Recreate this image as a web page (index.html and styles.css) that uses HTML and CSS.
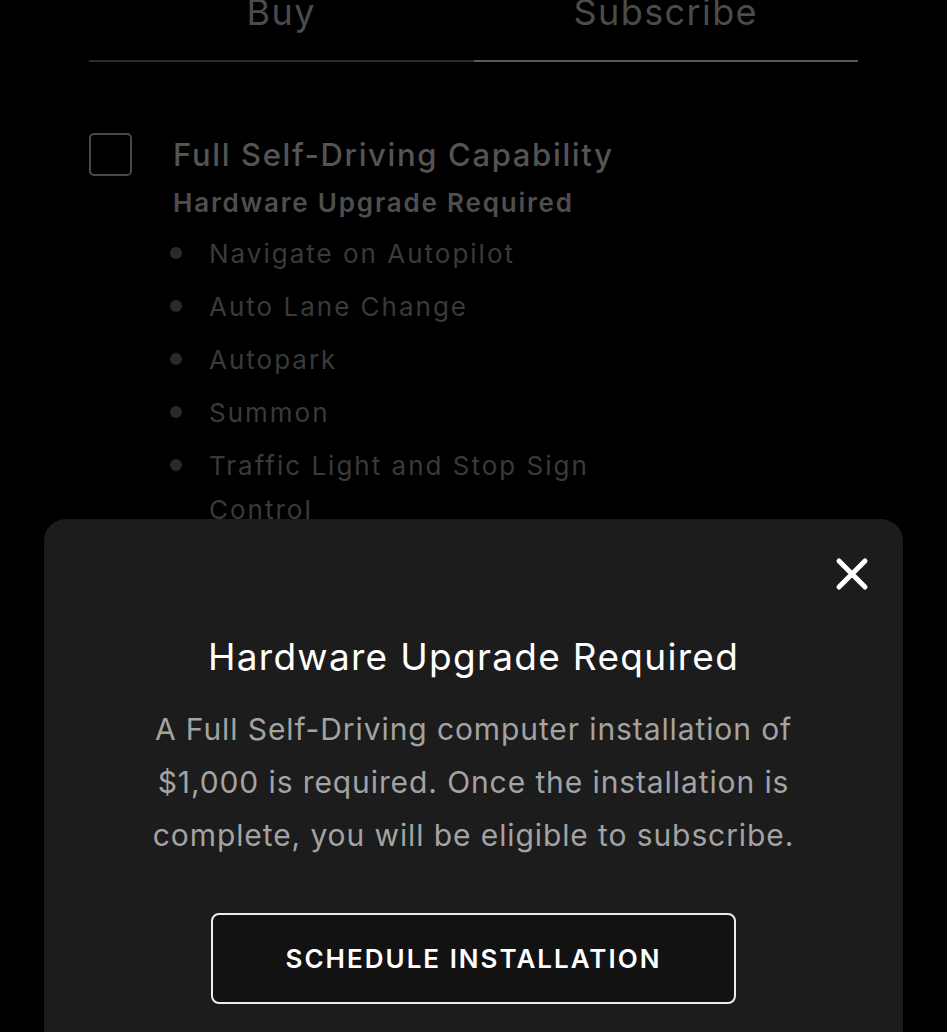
FILE: index.html
```html
<!DOCTYPE html>
<html lang="en">
<head>
  <meta charset="UTF-8">
  <meta name="viewport" content="width=device-width, initial-scale=1.0">
  <title>Full Self-Driving</title>
  <link rel="stylesheet" href="styles.css">
</head>
<body>

  <main class="page">
    <nav class="tabs">
      <span class="tab">Buy</span>
      <span class="tab active">Subscribe</span>
    </nav>

    <section class="feature">
      <span class="checkbox"></span>
      <div class="feature-body">
        <h2>Full Self-Driving Capability</h2>
        <h3>Hardware Upgrade Required</h3>
        <ul>
          <li>Navigate on Autopilot</li>
          <li>Auto Lane Change</li>
          <li>Autopark</li>
          <li>Summon</li>
          <li>Traffic Light and Stop Sign Control</li>
        </ul>
      </div>
    </section>
  </main>

  <aside class="sheet">
    <button class="close" aria-label="Close">
      <svg viewBox="0 0 34 34" width="34" height="34">
        <path d="M4 4 L30 30 M30 4 L4 30" stroke="#fff" stroke-width="5" stroke-linecap="round" fill="none"/>
      </svg>
    </button>
    <h1>Hardware Upgrade Required</h1>
    <p>A Full Self-Driving computer installation of $1,000 is required. Once the installation is complete, you will be eligible to subscribe.</p>
    <button class="schedule">SCHEDULE INSTALLATION</button>
  </aside>

</body>
</html>
```

FILE: styles.css
```css
body {
  font-family: Inter, "Noto Sans", sans-serif;
  margin: 0;
  background-color: #000;
  height: 100vh;
  overflow: hidden;
}
.page {
  padding: 0 89px;
}
.tabs {
  display: flex;
  margin-top: -8px;

  .tab {
    flex: 1;
    text-align: center;
    font-size: 36px;
    line-height: 40px;
    letter-spacing: 1.4px;
    color: #4b4b4b;
    padding-bottom: 28px;
    border-bottom: 2px solid #2c2c2c;
    &.active {
      border-color: #5a5a5a;
    }
  }
}

.feature {
  display: flex;
  gap: 41px;
  margin-top: 71px;

  .checkbox {
    flex: none;
    width: 39px;
    height: 39px;
    border: 2px solid #4a4a4a;
    border-radius: 5px;
  }
  .feature-body {
    padding-top: 4px;
    width: 460px;
  }
  h2 {
    margin: 0;
    font-size: 31px;
    line-height: 36px;
    font-weight: 500;
    color: #545454;
    letter-spacing: 1.65px;
    white-space: nowrap;
  }
  h3 {
    margin: 15px 0 0;
    font-size: 26px;
    line-height: 30px;
    font-weight: 600;
    color: #4e4e4e;
    letter-spacing: 1.8px;
  }
  ul {
    list-style: none;
    margin: 14px 0 0;
    padding: 0;
    display: flex;
    flex-direction: column;
    gap: 9px;
  }
  li {
    position: relative;
    padding-left: 36px;
    font-size: 26px;
    line-height: 44px;
    color: #3a3a3a;
    letter-spacing: 2px;
    &::before {
      content: '';
      position: absolute;
      left: -3px;
      top: 15px;
      width: 12px;
      height: 12px;
      border-radius: 50%;
      background-color: #2a2a2a;
    }
  }
}

.sheet {
  position: absolute;
  top: 519px;
  left: 44px;
  right: 44px;
  height: 600px;
  box-sizing: border-box;
  padding-top: 116px;
  background-color: #1c1c1c;
  border-radius: 22px;
  display: flex;
  flex-direction: column;
  align-items: center;
  text-align: center;

  .close {
    position: absolute;
    top: 38px;
    right: 34px;
    padding: 0;
    border: 0;
    background: none;
    display: flex;
  }
  h1 {
    margin: 0;
    font-size: 37px;
    line-height: 44px;
    font-weight: 400;
    letter-spacing: 1.3px;
    color: #fff;
  }
  p {
    margin: 24px 0 0;
    width: 660px;
    font-size: 30px;
    line-height: 53px;
    letter-spacing: 0.9px;
    color: #a3a3a3;
  }
  .schedule {
    margin-top: 51px;
    width: 525px;
    height: 91px;
    background-color: #121212;
    border: 2px solid #ececec;
    border-radius: 8px;
    color: #fff;
    font-family: inherit;
    font-size: 26px;
    font-weight: 600;
    letter-spacing: 2px;
  }
}
```
